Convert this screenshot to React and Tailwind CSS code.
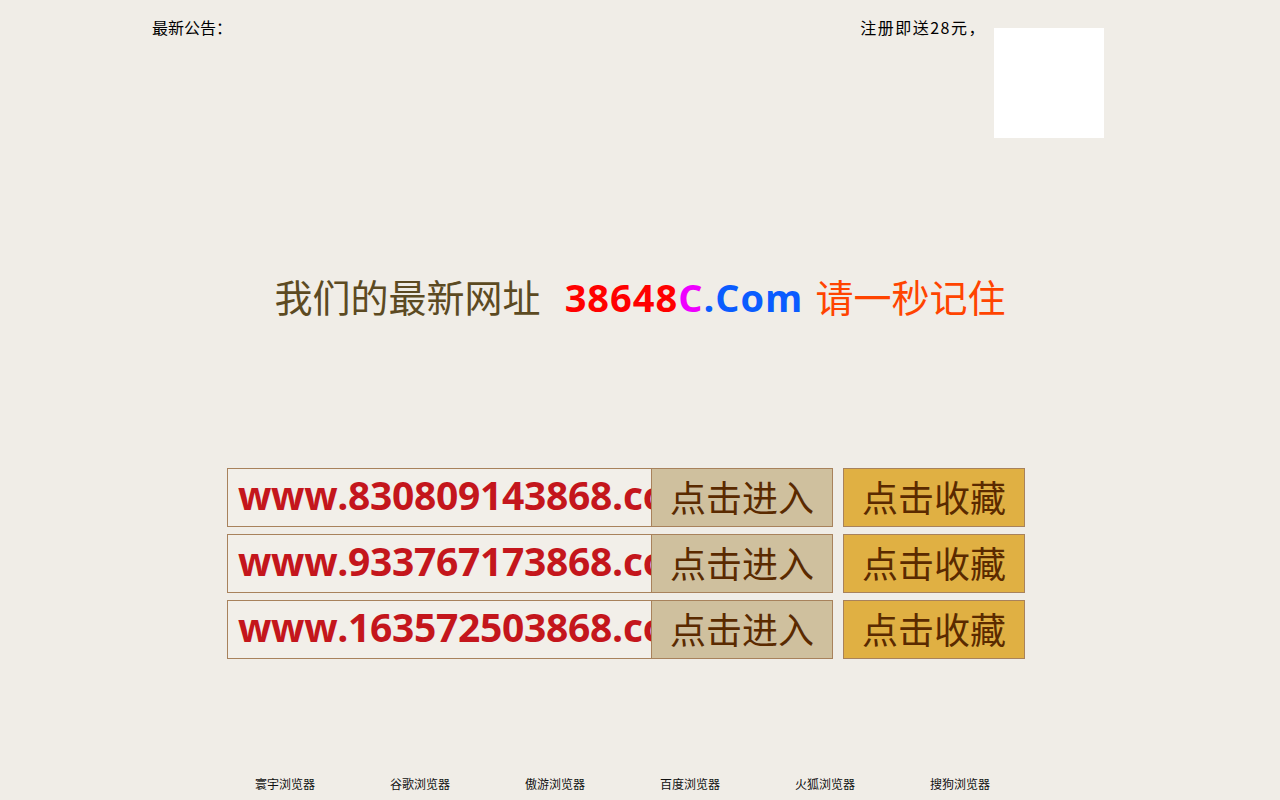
export default function App() {
  const urls = ['www.830809143868.com', 'www.933767173868.com', 'www.163572503868.com'];
  const browsers = ['寰宇浏览器', '谷歌浏览器', '傲游浏览器', '百度浏览器', '火狐浏览器', '搜狗浏览器'];
  const cjk = { fontFamily: '"Noto Sans CJK SC", "Noto Sans", sans-serif' };
  const latin = { fontFamily: '"Open Sans", sans-serif', letterSpacing: '1px' };

  return (
    <div className="w-full h-[800px] bg-[#f0ede7] overflow-hidden" style={cjk}>
      <div className="w-[976px] mx-auto">
        {/* top notice */}
        <div className="flex justify-between pt-[16px] pr-[24px]">
          <div className="text-[16px] leading-[22px] text-black">最新公告：</div>
          <div className="flex items-start gap-[8px]">
            <div className="text-[16px] leading-[22px] text-black tracking-[1.5px]">注册即送28元，</div>
            <div className="w-[110px] h-[110px] bg-white mt-[12px]"></div>
          </div>
        </div>

        {/* headline */}
        <div className="mt-[134px] text-center text-[38px] leading-[48px] whitespace-nowrap">
          <span className="text-[#5c4a22] mr-[24px]">我们的最新网址</span>
          <span className="font-bold text-[#ff0000]" style={latin}>38648</span>
          <span className="font-bold text-[#ee00ff]" style={latin}>C</span>
          <span className="font-bold text-[#0a5cff]" style={latin}>.Com</span>
          <span className="text-[#ff4400] ml-[12px]">请一秒记住</span>
        </div>

        {/* url rows */}
        <div className="mt-[147px] pl-[75px] flex flex-col gap-[7px]">
          {urls.map((u) => (
            <div key={u} className="flex">
              <div className="w-[425px] h-[59px] border border-[#a8825c] bg-[#f2efe9] overflow-hidden pl-[10px] pb-[4px] flex items-center">
                <span className="text-[39px] font-bold text-[#c4161c] whitespace-nowrap tracking-[-0.3px]" style={{ fontFamily: '"Open Sans", sans-serif' }}>{u}</span>
              </div>
              <button className="w-[182px] h-[59px] -ml-px border border-[#a8825c] bg-[#cfc09e] text-[36px] text-[#5a2a00] leading-none pb-[4px]">点击进入</button>
              <button className="w-[182px] h-[59px] ml-[10px] border border-[#a8825c] bg-[#e0b043] text-[36px] text-[#5a2a00] leading-none pb-[4px]">点击收藏</button>
            </div>
          ))}
        </div>

        {/* browsers */}
        <div className="mt-[116px] pl-[103px] flex gap-[75px]">
          {browsers.map((b) => (
            <span key={b} className="text-[12px] text-[#111] whitespace-nowrap">{b}</span>
          ))}
        </div>
      </div>
    </div>
  );
}
